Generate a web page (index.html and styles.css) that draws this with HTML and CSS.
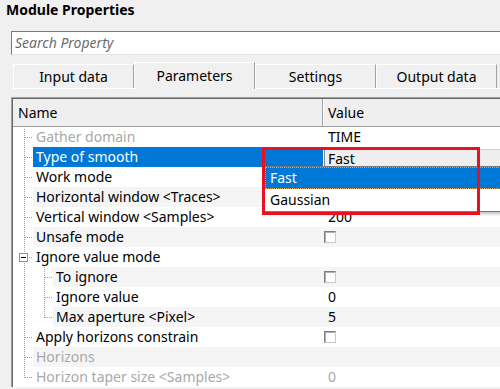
FILE: index.html
```html
<!DOCTYPE html>
<html>
<head>
<meta charset="utf-8">
<link rel="stylesheet" href="styles.css">
</head>
<body>
<div class="page">
  <div class="title">Module Properties</div>
  <div class="search"><span class="ph">Search Property</span></div>
  <div class="tabs">
    <div class="tab">Input data</div>
    <div class="tab sel">Parameters</div>
    <div class="tab">Settings</div>
    <div class="tab">Output data</div>
  </div>
  <div class="grid">
    <div class="hdr">
      <div class="hname">Name</div>
      <div class="hval">Value</div>
    </div>
    <div class="row">
      <div class="name"><span class="g tee first"></span><span class="lbl dis">Gather domain</span></div>
      <div class="val">TIME</div>
    </div>
    <div class="row alt cur">
      <div class="name"><span class="g tee"></span><span class="lbl">Type of smooth</span></div>
      <div class="val"><div class="combo">Fast</div></div>
    </div>
    <div class="row">
      <div class="name"><span class="g tee"></span><span class="lbl">Work mode</span></div>
      <div class="val"></div>
    </div>
    <div class="row alt">
      <div class="name"><span class="g tee"></span><span class="lbl">Horizontal window &lt;Traces&gt;</span></div>
      <div class="val"></div>
    </div>
    <div class="row">
      <div class="name"><span class="g tee"></span><span class="lbl">Vertical window &lt;Samples&gt;</span></div>
      <div class="val">200</div>
    </div>
    <div class="row alt">
      <div class="name"><span class="g tee"></span><span class="lbl">Unsafe mode</span></div>
      <div class="val"><span class="chk"></span></div>
    </div>
    <div class="row">
      <div class="name"><span class="g tee"><span class="minus"></span></span><span class="lbl">Ignore value mode</span></div>
      <div class="val"></div>
    </div>
    <div class="row alt">
      <div class="name"><span class="g pipe"></span><span class="g tee top"></span><span class="lbl">To ignore</span></div>
      <div class="val"><span class="chk"></span></div>
    </div>
    <div class="row">
      <div class="name"><span class="g pipe"></span><span class="g tee"></span><span class="lbl">Ignore value</span></div>
      <div class="val">0</div>
    </div>
    <div class="row alt">
      <div class="name"><span class="g pipe"></span><span class="g elbow"></span><span class="lbl">Max aperture &lt;Pixel&gt;</span></div>
      <div class="val">5</div>
    </div>
    <div class="row">
      <div class="name"><span class="g tee"></span><span class="lbl">Apply horizons constrain</span></div>
      <div class="val"><span class="chk"></span></div>
    </div>
    <div class="row alt">
      <div class="name"><span class="g tee"></span><span class="lbl dis">Horizons</span></div>
      <div class="val"></div>
    </div>
    <div class="row">
      <div class="name"><span class="g elbow"></span><span class="lbl dis">Horizon taper size &lt;Samples&gt;</span></div>
      <div class="val dis">0</div>
    </div>
  </div>
  <div class="dropdown">
    <div class="opt on">Fast</div>
    <div class="opt">Gaussian</div>
  </div>
  <div class="mark"></div>
</div>
</body>
</html>
```
FILE: styles.css
```css
html, body {
  margin: 0;
  padding: 0;
  background: #f0f0f0;
  overflow: hidden;
}
.page {
  position: relative;
  width: 500px;
  height: 389px;
  overflow: hidden;
  font-family: "Noto Sans", "Liberation Sans", sans-serif;
  font-size: 14px;
  color: #000;
}
.title {
  height: 31px;
  line-height: 19px;
  padding-left: 6px;
  font-weight: bold;
  font-size: 14px;
  box-sizing: border-box;
}
.search {
  margin-left: 11px;
  height: 24px;
  box-sizing: border-box;
  background: #fff;
  border-top: 1px solid #7a7a7a;
  border-left: 1px solid #7a7a7a;
  border-bottom: 1px solid #e3e3e3;
  padding-left: 3px;
  line-height: 22px;
}
.ph {
  font-style: italic;
  color: #6d6d6d;
}
.tabs {
  display: flex;
  align-items: flex-end;
  margin: 7px 0 0 13px;
  height: 27px;
  box-sizing: border-box;
  border-bottom: 1px solid #fff;
}
.tab {
  width: 121px;
  height: 24px;
  box-sizing: border-box;
  border-top: 1px solid #fff;
  border-left: 1px solid #fff;
  border-right: 1px solid #a0a0a0;
  text-align: center;
  line-height: 24px;
  flex: none;
}
.tab.sel {
  height: 27px;
  margin-bottom: -1px;
  width: 121px;
  line-height: 26px;
  background: #f0f0f0;
}
.grid {
  margin: 8px 0 0 11px;
  border-top: 1px solid #a0a0a0;
  border-left: 1px solid #a0a0a0;
  box-shadow: inset 1px 1px 0 #696969;
  padding: 1px 0 0 1px;
}
.hdr {
  display: flex;
  height: 28px;
  box-sizing: border-box;
  border-bottom: 1px solid #a0a0a0;
  background: #efefef;
}
.hname {
  width: 310px;
  box-sizing: border-box;
  padding-left: 5px;
  line-height: 27px;
  border-right: 1px solid #a0a0a0;
}
.hval {
  flex: 1;
  padding-left: 4px;
  line-height: 27px;
  border-left: 1px solid #fff;
}
.row {
  display: flex;
  height: 20px;
  line-height: 20px;
  background: #fff;
}
.name {
  width: 310px;
  display: flex;
  flex: none;
}
.lbl {
  flex: 1;
  padding-left: 3px;
  white-space: nowrap;
}
.val {
  flex: 1;
  padding-left: 5px;
  display: flex;
  align-items: center;
}
.row.alt .lbl, .row.alt .val {
  background: #f5f5f5;
}
.row.cur .lbl {
  background: #0078d7;
  color: #fff;
}
.row.cur .val {
  background: #fff;
  padding-left: 1px;
}
.dis {
  color: #a8a8a8;
}
.g {
  width: 20px;
  flex: none;
  display: flex;
  align-items: center;
  background-repeat: no-repeat;
}
.g.tee {
  background-image:
    repeating-linear-gradient(to bottom, #a0a0a0 0 1px, transparent 1px 2px),
    repeating-linear-gradient(to right, #a0a0a0 0 1px, transparent 1px 2px);
  background-position: 11px 0, 12px 10px;
  background-size: 1px 100%, 8px 1px;
}
.g.tee.first {
  background-position: 11px 2px, 12px 10px;
}
.g.elbow {
  background-image:
    repeating-linear-gradient(to bottom, #a0a0a0 0 1px, transparent 1px 2px),
    repeating-linear-gradient(to right, #a0a0a0 0 1px, transparent 1px 2px);
  background-position: 11px 0, 12px 10px;
  background-size: 1px 11px, 8px 1px;
}
.g.pipe {
  background-image: repeating-linear-gradient(to bottom, #a0a0a0 0 1px, transparent 1px 2px);
  background-position: 11px 0;
  background-size: 1px 100%;
}
.minus {
  width: 9px;
  height: 9px;
  box-sizing: border-box;
  margin-left: 6px;
  border: 1px solid #919191;
  background: #fff linear-gradient(#000, #000) no-repeat 1px 3px / 5px 1px;
}
.chk {
  width: 12px;
  height: 12px;
  box-sizing: border-box;
  border-top: 1px solid #7f7f7f;
  border-left: 1px solid #7f7f7f;
  border-right: 1px solid #c9c9c9;
  border-bottom: 1px solid #c9c9c9;
  background: #fff;
  box-shadow: inset 1px 1px 0 #b0b0b0;
  margin-left: -4px;
}
.combo {
  flex: 1;
  height: 18px;
  margin-top: 2px;
  box-sizing: border-box;
  background: #eeeeee;
  border-left: 1px solid #8a8a8a;
  border-top: 1px solid #d0d0d0;
  padding-left: 3px;
  line-height: 17px;
}
.dropdown {
  position: absolute;
  left: 264px;
  top: 166px;
  width: 240px;
  height: 46px;
  box-sizing: border-box;
  background: #fff;
  border: 1px solid #7a7a7a;
  box-shadow: 1px 2px 3px rgba(0,0,0,0.25);
}
.opt {
  height: 22px;
  line-height: 22px;
  padding-left: 5px;
  box-sizing: border-box;
}
.opt.on {
  background: #0078d7;
  color: #fff;
  outline: 1px dotted #e0a060;
  outline-offset: -1px;
}
.mark {
  position: absolute;
  left: 262px;
  top: 147px;
  width: 218px;
  height: 68px;
  box-sizing: border-box;
  border: 3px solid #e81123;
}
```
